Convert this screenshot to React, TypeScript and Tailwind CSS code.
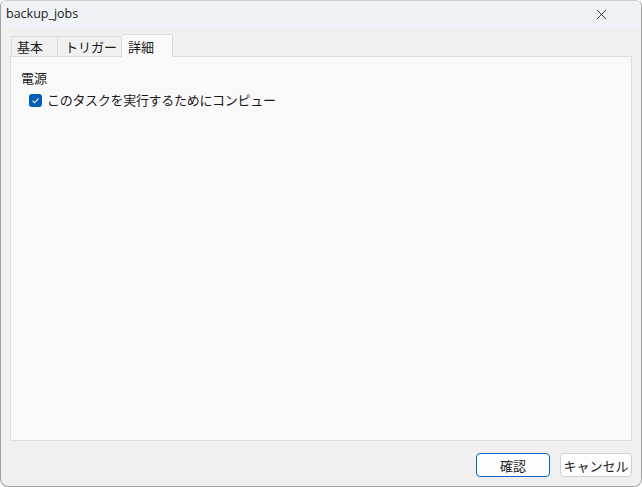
import { X } from 'lucide-react';

const font = { fontFamily: '"Noto Sans CJK JP", "Noto Sans", sans-serif' };

export default function App() {
  return (
    <div className="w-[642px] h-[487px] bg-white">
      {/* Window */}
      <div
        className="w-[642px] h-[487px] flex flex-col bg-[#f0f0f0] border border-[#a3a3a3] border-t-[#d0d0d0] rounded-b-[8px] rounded-t-[6px] overflow-hidden text-[#1a1a1a]"
        style={font}
      >
        {/* Title bar */}
        <div className="h-[26px] shrink-0 flex items-center justify-between bg-[#eff3f8] pl-[5px] pr-[31px]">
          <span className="text-[12.5px] leading-none" style={{ fontFamily: '"Open Sans", "Liberation Sans", sans-serif' }}>
            backup_jobs
          </span>
          <X className="w-[17px] h-[17px] text-[#222]" strokeWidth={1.3} />
        </div>

        {/* Body */}
        <div className="flex-1 flex flex-col px-[9px] pt-[6px] pb-[9px]">
          {/* Tabs */}
          <div className="flex items-end h-[23px] pl-[1px]">
            <div className="h-[20px] w-[47px] flex items-center pl-[5px] border border-b-0 border-[#dcdcdc] text-[13px] leading-none">
              基本
            </div>
            <div className="h-[20px] w-[64px] flex items-center pl-[7px] border border-b-0 border-l-0 border-[#dcdcdc] text-[13px] leading-none">
              トリガー
            </div>
            <div className="h-[23px] w-[51px] flex items-center pl-[6px] border border-b-0 border-l-0 border-[#dcdcdc] bg-[#f9f9f9] text-[13px] leading-none relative top-[1px] z-10">
              詳細
            </div>
          </div>

          {/* Panel */}
          <div className="h-[385px] bg-[#f9f9f9] border border-[#dcdcdc] pt-[13px] pl-[10px]">
            <div className="text-[13px] leading-[16px]">電源</div>
            <label className="flex items-center gap-[5px] mt-[6px] ml-[8px]">
              <span className="w-[13px] h-[13px] rounded-[3px] bg-[#005fb8] flex items-center justify-center">
                <svg viewBox="0 0 12 12" className="w-[9px] h-[9px]" fill="none" stroke="white" strokeWidth="1.4">
                  <path d="M2 6.3 L4.8 9 L10 3.2" />
                </svg>
              </span>
              <span className="text-[13px] leading-[16px] tracking-[-0.3px]">このタスクを実行するためにコンピュー</span>
            </label>
          </div>

          {/* Buttons */}
          <div className="flex justify-end gap-[10px] mt-[12px]">
            <button className="w-[74px] h-[24px] rounded-[4px] border border-[#0067c0] bg-[#fdfdfd] text-[13px] leading-none">
              確認
            </button>
            <button className="w-[72px] h-[24px] rounded-[4px] border border-[#d0d0d0] bg-[#fdfdfd] text-[13px] leading-none">
              キャンセル
            </button>
          </div>
        </div>
      </div>
    </div>
  );
}
